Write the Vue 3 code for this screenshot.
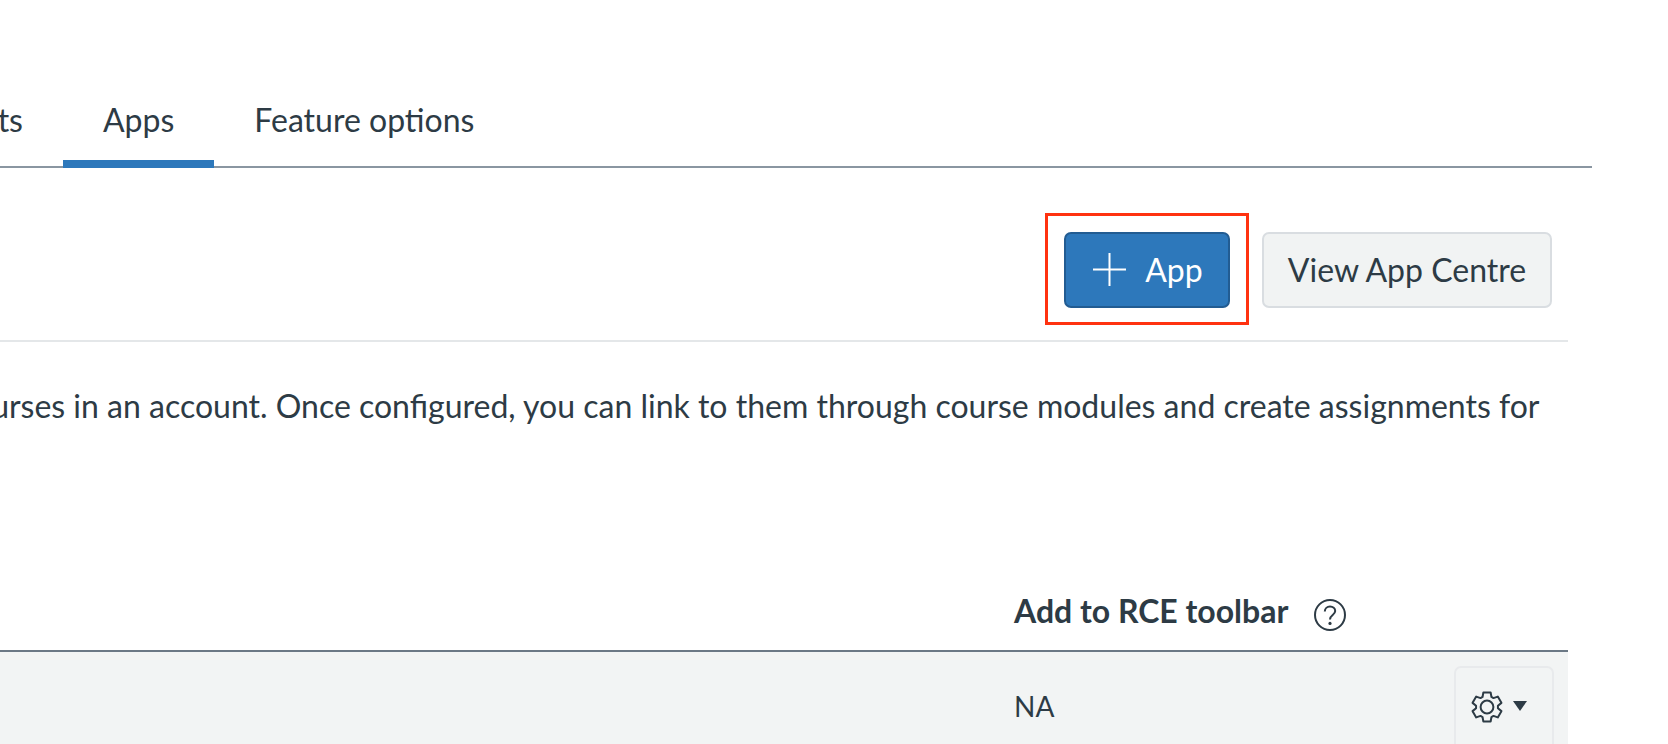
<template>
  <div class="page">
    <nav class="tabs">
      <a class="tab first">Reports</a>
      <a class="tab active">Apps</a>
      <a class="tab">Feature options</a>
    </nav>

    <div class="content">
      <div class="toolbar">
        <div class="highlight">
          <button class="btn btn-primary">
            <svg class="plus" viewBox="0 0 33 33" width="33" height="33">
              <path d="M16.5 0v33M0 16.5h33" fill="none" stroke="#fff" stroke-width="2" />
            </svg>
            <span>App</span>
          </button>
        </div>
        <button class="btn btn-default">View App Centre</button>
      </div>

      <p class="intro">
        Apps are an easy way to add new features to Canvas. They can be added to individual courses or to all courses in an account. Once configured, you can link to them through course modules and create assignments for
      </p>

      <div class="table">
        <div class="thead">
          <span class="th-label">Add to RCE toolbar</span>
          <svg class="help" viewBox="0 0 32 32" width="32" height="32">
            <circle cx="16" cy="16" r="15" fill="none" stroke="#2d3b45" stroke-width="2" />
            <path d="M10.8 12.6c0-3 2.3-5 5.2-5s5.2 1.9 5.2 4.5c0 3.9-5.2 4-5.2 8.3" fill="none" stroke="#2d3b45" stroke-width="2" />
            <circle cx="16" cy="24.4" r="1.6" fill="#2d3b45" />
          </svg>
        </div>
        <div class="row">
          <span class="cell-value">NA</span>
          <button class="gear-btn">
            <svg viewBox="0 0 32 32" width="32" height="32">
              <path :d="gearPath" fill="none" stroke="#2d3b45" stroke-width="2" stroke-linejoin="round" />
              <circle cx="16" cy="16" r="6.4" fill="none" stroke="#2d3b45" stroke-width="2" />
            </svg>
            <svg class="caret" viewBox="0 0 14 10" width="14" height="10">
              <path d="M0 0h14L7 10z" fill="#2d3b45" />
            </svg>
          </button>
        </div>
      </div>
    </div>
  </div>
</template>

<script setup>
// six tooth gear outline, tooth pointing up first
const teeth = [0, 60, 120, 180, 240, 300]
const point = (deg, r) => {
  const a = ((deg - 90) * Math.PI) / 180
  return `${(16 + r * Math.cos(a)).toFixed(2)} ${(16 + r * Math.sin(a)).toFixed(2)}`
}
const gearPath =
  'M' +
  teeth
    .map((t) =>
      [point(t - 24, 11), point(t - 14, 15), point(t + 14, 15), point(t + 24, 11)].join('L')
    )
    .join('L') +
  'Z'
</script>

<style>
html,
body {
  margin: 0;
  background: #fff;
  overflow: hidden;
}
</style>

<style scoped>
.page {
  width: 1668px;
  height: 744px;
  overflow: hidden;
  font-family: Lato, "Liberation Sans", sans-serif;
  color: #2d3b45;
  font-variant-ligatures: common-ligatures;
}

.tabs {
  display: flex;
  width: 1592px;
  height: 168px;
  box-sizing: border-box;
  border-bottom: 2px solid #8a96a1;
}

.tab {
  height: 168px;
  box-sizing: border-box;
  padding: 97px 40px 0;
  font-size: 32px;
  line-height: 46px;
  white-space: nowrap;
}

.tab.first {
  margin-left: -126px;
}

.tab.active {
  border-bottom: 8px solid #2d78bb;
}

.content {
  width: 1568px;
}

.toolbar {
  display: flex;
  justify-content: flex-end;
  align-items: flex-start;
  gap: 13px;
  height: 174px;
  box-sizing: border-box;
  padding: 45px 16px 0 0;
  border-bottom: 2px solid #e4e7e9;
}

.highlight {
  display: flex;
  padding: 16px 16px 14px;
  border: 3px solid #ff3210;
}

.btn {
  height: 76px;
  padding: 0 0 2px;
  font-family: inherit;
  font-size: 32px;
  border-radius: 7px;
  box-sizing: border-box;
  display: flex;
  align-items: center;
  justify-content: center;
}

.btn-primary {
  width: 166px;
  padding-left: 2px;
  gap: 19px;
  background: #2d78bb;
  color: #fff;
  border: 2px solid #225c92;
}

.btn-default {
  width: 290px;
  margin-top: 19px;
  background: #f1f3f3;
  color: #2d3b45;
  border: 2px solid #d9dde1;
}

.intro {
  width: 3000px;
  margin: 42px 0 0 -1472px;
  font-size: 32px;
  line-height: 44px;
  text-align: right;
  white-space: nowrap;
}

.table {
  margin-top: 162px;
}

.thead {
  display: flex;
  align-items: flex-start;
  height: 62px;
  box-sizing: border-box;
  padding-left: 1014px;
  border-bottom: 2px solid #6b7885;
  gap: 26px;
  font-size: 32px;
  font-weight: 700;
  line-height: 42px;
}

.help {
  margin-top: 9px;
}

.row {
  display: flex;
  align-items: flex-start;
  justify-content: space-between;
  height: 100px;
  padding: 14px 14px 0 1014px;
  background: #f2f4f4;
}

.cell-value {
  font-size: 28px;
  line-height: 80px;
}

.gear-btn {
  width: 100px;
  height: 100px;
  box-sizing: border-box;
  display: flex;
  align-items: flex-start;
  gap: 10px;
  padding: 23px 0 0 15px;
  background: transparent;
  border: 2px solid #e8eaec;
  border-radius: 7px;
}

.caret {
  margin-top: 10px;
}
</style>
